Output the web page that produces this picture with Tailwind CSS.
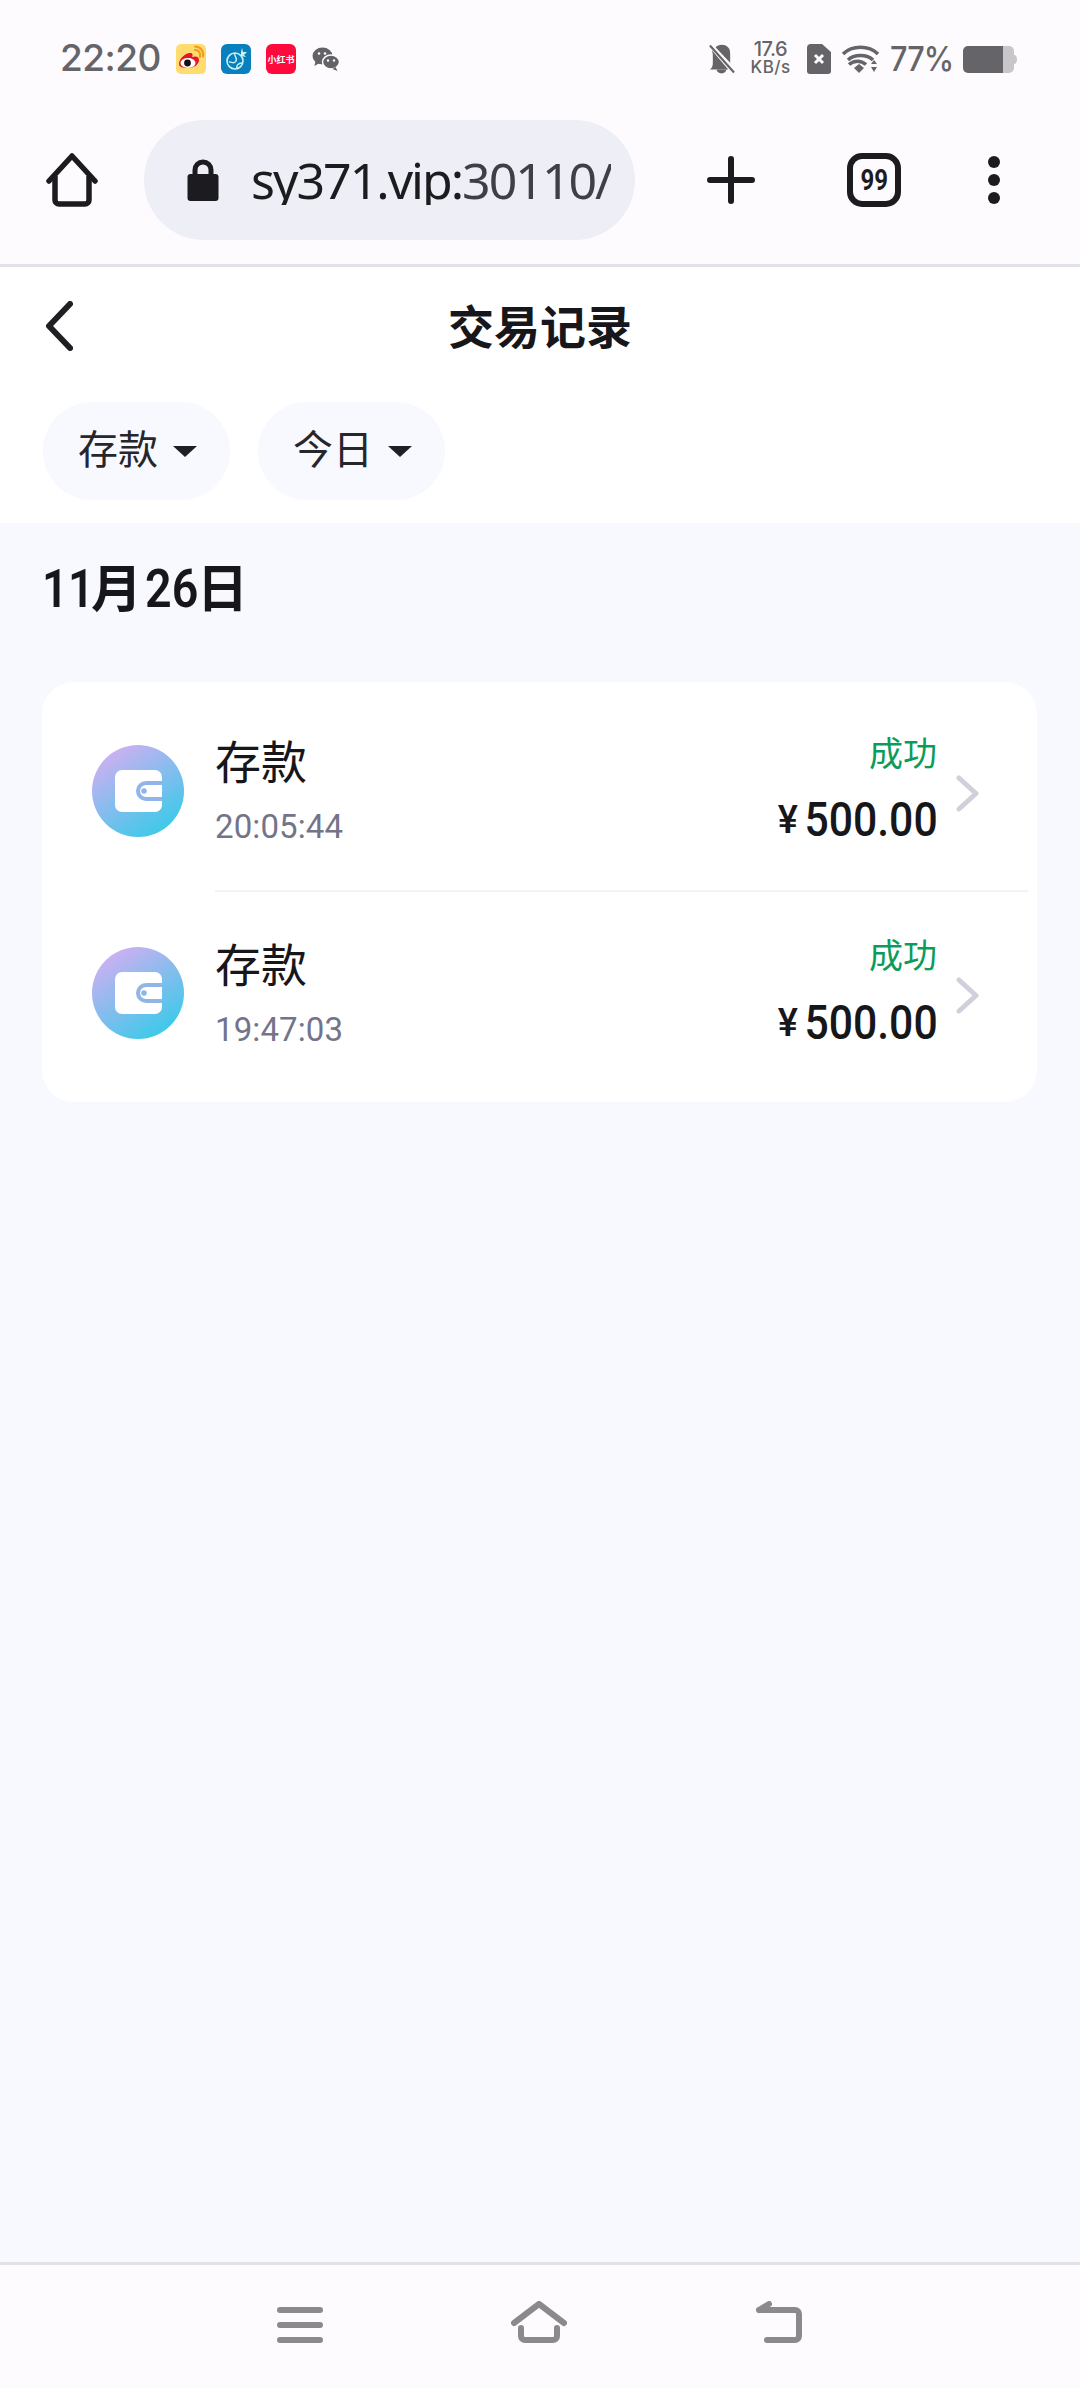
<!DOCTYPE html>
<html lang="zh-CN">
<head>
  <title>交易记录</title>
  <meta charset="UTF-8" />
  <meta name="viewport" content="width=device-width, initial-scale=1.0"/>
  <script src="https://cdn.jsdelivr.net/npm/@tailwindcss/browser@4"></script>
</head>

<body class="w-[1080px] h-[2388px] flex flex-col overflow-hidden bg-[#f8f9fe] text-[#17171b] font-['Roboto','Noto_Sans_CJK_SC',sans-serif]">

  <!-- Browser chrome -->
  <header class="h-[267px] shrink-0 bg-[#fdfbfe] border-b-[3px] border-[#e3e1e8]">

    <!-- Status bar -->
    <div class="h-[114px] flex items-center text-[#656468]">
      <span class="ml-[60px] w-[94px] shrink-0 text-[37px] leading-none font-['Inter',sans-serif] font-medium tracking-[-0.5px]">22:20</span>

      <!-- weibo -->
      <svg class="ml-[22px] mt-[4px] shrink-0" width="30" height="30" viewBox="0 0 30 30">
        <rect width="30" height="30" rx="5" fill="#ffdc6e"/>
        <path d="M3 20c0-5 6-11 11-11 3 0 3 2 2 4 3-1 7-1 7 3 0 5-6 8-11 8-5 0-9-1-9-4z" fill="#e6162d"/>
        <ellipse cx="12" cy="19" rx="7.500" ry="5" fill="#fff"/>
        <circle cx="11.500" cy="19" r="3.400" fill="#111"/>
        <path d="M19 6c4 0 6 3 5 7M19 2.500c6 0 9 5 8 10" fill="none" stroke="#f39a1d" stroke-width="2" stroke-linecap="round"/>
      </svg>

      <!-- blue app -->
      <svg class="ml-[15px] mt-[4px] shrink-0" width="30" height="30" viewBox="0 0 30 30">
        <rect width="30" height="30" rx="6" fill="#0880bd"/>
        <circle cx="14" cy="17" r="8" fill="none" stroke="#c9f2f6" stroke-width="1.600"/>
        <path d="M14 9c-2 3 3 4 1 8s-5 0-7 1M16 25c-1-3 1-6 5-6" fill="none" stroke="#c9f2f6" stroke-width="1.400"/>
        <path d="M20 8l1-4 1 4 4 0-3 3 2 2-5-1z" fill="#c9f2f6"/>
      </svg>

      <!-- xiaohongshu -->
      <div class="ml-[15px] mt-[4px] w-[30px] h-[30px] shrink-0 rounded-[6px] bg-[#fe0a3c] flex items-center justify-center text-white text-[9px] font-bold leading-none whitespace-nowrap font-['Noto_Sans_CJK_SC',sans-serif]">小红书</div>

      <!-- wechat -->
      <svg class="ml-[16px] mt-[4px] shrink-0" width="28" height="24" viewBox="0 0 27 24">
        <ellipse cx="10" cy="9" rx="10" ry="8.500" fill="#636266"/>
        <path d="M3 14l-1 5 5-3z" fill="#636266"/>
        <ellipse cx="18.500" cy="15" rx="8.500" ry="7" fill="#636266" stroke="#fdfbfe" stroke-width="1.500"/>
        <path d="M23 20l2 4-5-2z" fill="#636266"/>
        <circle cx="6.500" cy="6.500" r="1.300" fill="#fdfbfe"/><circle cx="12.500" cy="6.500" r="1.300" fill="#fdfbfe"/>
        <circle cx="15.500" cy="13.500" r="1.200" fill="#fdfbfe"/><circle cx="21.500" cy="13.500" r="1.200" fill="#fdfbfe"/>
      </svg>

      <!-- bell off -->
      <svg class="ml-[368px] mt-[2px] shrink-0" width="27" height="31" viewBox="0 0 28 31">
        <path d="M4 7l17 20H2c2-2 3-3 3-8v-8zM8 4c2-3 9-4 13 0 2 2 2 5 2 8v8z" fill="#656468"/>
        <path d="M9 27a5 4 0 0 0 10 0z" fill="#656468"/>
        <path d="M2 2l25 28" stroke="#656468" stroke-width="2.200"/>
      </svg>

      <!-- network speed -->
      <div class="ml-[14px] w-[43px] shrink-0 flex flex-col items-center font-['Inter',sans-serif] font-medium leading-none">
        <span class="text-[20px] h-[20px] tracking-[-0.5px] whitespace-nowrap">17.6</span>
        <span class="text-[17px] h-[17px] tracking-[0.4px] whitespace-nowrap">KB/s</span>
      </div>

      <!-- sim, no service -->
      <svg class="ml-[15px] mt-[4px] shrink-0" width="24" height="30" viewBox="0 0 24 30">
        <path d="M4 0h11l9 8v19a3 3 0 0 1-3 3H3a3 3 0 0 1-3-3V4a4 4 0 0 1 4-4z" fill="#656468"/>
        <path d="M8 11l8 8M16 11l-8 8" stroke="#fdfbfe" stroke-width="3"/>
      </svg>

      <!-- wifi -->
      <svg class="ml-[11px] mt-[4px] shrink-0" width="37" height="28" viewBox="0 0 37 28">
        <path d="M1 9c9-9 26-9 35 0M6 15c6-6 19-6 25 0" fill="none" stroke="#656468" stroke-width="3.500"/>
        <path d="M7 19.500c5-4.500 12-4.500 17 0" fill="none" stroke="#656468" stroke-width="3.500"/>
        <path d="M12 23l5-4 5 4-5 5z" fill="#656468"/>
        <path d="M32 15l3 4h-6zM32 27l3-5h-6z" fill="#656468"/>
      </svg>

      <span class="ml-[11px] w-[63px] shrink-0 text-[34px] leading-none font-['Inter',sans-serif] font-medium tracking-[-1px] whitespace-nowrap mt-[4px] origin-left scale-x-[.9]">77%</span>

      <!-- battery -->
      <svg class="ml-[10px] mt-[4px] shrink-0" width="54" height="27" viewBox="0 0 54 27">
        <path d="M5 0h35v27H5a5 5 0 0 1-5-5V5a5 5 0 0 1 5-5z" fill="#656468"/>
        <path d="M40 0h6a5 5 0 0 1 5 5v17a5 5 0 0 1-5 5h-6z" fill="#c9c6ca"/>
        <path d="M51 9c2 0 3 2 3 4.500S53 18 51 18z" fill="#c9c6ca"/>
      </svg>
    </div>

    <!-- Toolbar -->
    <div class="flex items-start pt-[6px]">
      <svg class="ml-[45px] mt-[33px] shrink-0" width="54" height="54" viewBox="0 0 52 54">
        <path d="M3 28L26 3l23 25" fill="none" stroke="#1c1b20" stroke-width="5.500" stroke-linecap="round" stroke-linejoin="round"/>
        <path d="M9 23v24a4 4 0 0 0 4 4h26a4 4 0 0 0 4-4V23" fill="none" stroke="#1c1b20" stroke-width="5.500"/>
      </svg>

      <div class="ml-[45px] w-[491px] h-[120px] shrink-0 rounded-full bg-[#eeeff6] flex items-center pl-[43px]">
        <svg class="shrink-0" width="32" height="42" viewBox="0 0 31 42">
          <path d="M7.500 17v-6a8 8 0 0 1 16 0v6" fill="none" stroke="#1c1b20" stroke-width="5"/>
          <rect y="15" width="31" height="27" rx="3" fill="#1c1b20"/>
        </svg>
        <div class="ml-[32px] w-[360px] overflow-hidden whitespace-nowrap text-[50px] leading-none font-['Noto_Sans',sans-serif] tracking-[-2px]"><span class="text-[#1c1b20]">sy371.vip:</span><span class="text-[#3f3f47]">30110/</span></div>
      </div>

      <svg class="ml-[72px] mt-[36px] shrink-0" width="48" height="48" viewBox="0 0 48 48">
        <path d="M24 3v42M3 24h42" stroke="#1c1b20" stroke-width="6" stroke-linecap="round"/>
      </svg>

      <div class="ml-[92px] mt-[33px] w-[54px] h-[54px] shrink-0 rounded-[15px] border-[6px] border-[#1c1b20] flex items-center justify-center">
        <span class="text-[30px] leading-none font-bold text-[#1c1b20] scale-x-[.8]">99</span>
      </div>

      <div class="ml-[87px] mt-[36px] w-[12px] shrink-0 flex flex-col gap-[6px]">
        <span class="w-[12px] h-[12px] rounded-full bg-[#1c1b20]"></span>
        <span class="w-[12px] h-[12px] rounded-full bg-[#1c1b20]"></span>
        <span class="w-[12px] h-[12px] rounded-full bg-[#1c1b20]"></span>
      </div>
    </div>
  </header>

  <!-- Page head with filters -->
  <section class="h-[256px] shrink-0 bg-white px-[43px]">
    <div class="relative h-[135px] flex items-start justify-center">
      <svg class="absolute left-[2px] top-[34px]" width="28" height="50" viewBox="0 0 28 50">
        <path d="M25 3L4 25l21 22" fill="none" stroke="#202024" stroke-width="6" stroke-linecap="round" stroke-linejoin="round"/>
      </svg>
      <h1 class="mt-[34px] text-[46px] leading-[54px] font-bold">交易记录</h1>
    </div>
    <div class="flex gap-[28px]">
      <button class="w-[187px] h-[98px] rounded-full bg-[#f8f9fe] flex items-center pl-[35px] text-[40px] text-[#26262b]">
        <span>存款</span>
        <span class="ml-[15px] w-0 h-0 border-x-[12px] border-x-transparent border-t-[11px] border-t-[#202024]"></span>
      </button>
      <button class="w-[187px] h-[98px] rounded-full bg-[#f8f9fe] flex items-center pl-[35px] text-[40px] text-[#26262b]">
        <span>今日</span>
        <span class="ml-[15px] w-0 h-0 border-x-[12px] border-x-transparent border-t-[11px] border-t-[#202024]"></span>
      </button>
    </div>
  </section>

  <!-- Transactions -->
  <main class="flex-1 px-[42px] pt-[39px]">
    <h2 class="flex items-center h-[54px] text-[51px] leading-none font-semibold text-[#17171b]">
      <span class="inline-block w-[49px] whitespace-nowrap origin-left scale-x-[.86] text-[53px]">11</span><span>月</span><span class="inline-block w-[52px] ml-[3px] whitespace-nowrap origin-left scale-x-[.88] text-[53px]">26</span><span>日</span>
    </h2>

    <div class="mt-[66px] w-[995px] h-[420px] pt-[8px] rounded-[32px] bg-white">

      <!-- row -->
      <div class="h-[200px] flex items-start">
        <svg class="ml-[50px] mt-[55px] shrink-0" width="92" height="92" viewBox="0 0 92 92">
          <defs>
            <linearGradient id="walletBg" x1="0.15" y1="0" x2="0.8" y2="1">
              <stop offset="0" stop-color="#d8aef2"/>
              <stop offset="1" stop-color="#33cbe9"/>
            </linearGradient>
          </defs>
          <circle cx="46" cy="46" r="46" fill="url(#walletBg)"/>
          <rect x="23" y="25" width="47" height="42" rx="7" fill="#fff"/>
          <path d="M70 38H54a8 8 0 0 0 0 16h16" fill="#fff" stroke="#8fb6e6" stroke-width="4"/>
          <circle cx="52" cy="46" r="2.800" fill="#8fb6e6"/>
        </svg>
        <div class="ml-[31px] flex-1 pt-[46px]">
          <div class="text-[46px] leading-[54px] text-[#17171b]">存款</div>
          <div class="mt-[18px] text-[33px] leading-[38px] text-[#73748a] tracking-[0.1px]">20:05:44</div>
        </div>
        <div class="w-[200px] pt-[44px] flex flex-col items-end">
          <div class="text-[34px] leading-[40px] text-[#0b9c59]">成功</div>
          <div class="mt-[22px] flex items-center justify-end h-[48px] font-medium">
            <span class="text-[38px] leading-none">¥</span>
            <span class="inline-block w-[149px] ml-[-10px] text-[48px] leading-none whitespace-nowrap text-right origin-right scale-x-[.89]">500.00</span>
          </div>
        </div>
        <svg class="ml-[19px] mr-[58px] mt-[85px] shrink-0" width="23" height="37" viewBox="0 0 23 37">
          <path d="M3 3l17 15.500L3 34" fill="none" stroke="#d0d0da" stroke-width="5" stroke-linecap="round" stroke-linejoin="round"/>
        </svg>
      </div>

      <div class="ml-[173px] mr-[9px] h-[2px] bg-[#f3f3f6]"></div>

      <!-- row -->
      <div class="h-[210px] flex items-start">
        <svg class="ml-[50px] mt-[55px] shrink-0" width="92" height="92" viewBox="0 0 92 92">
          <circle cx="46" cy="46" r="46" fill="url(#walletBg)"/>
          <rect x="23" y="25" width="47" height="42" rx="7" fill="#fff"/>
          <path d="M70 38H54a8 8 0 0 0 0 16h16" fill="#fff" stroke="#8fb6e6" stroke-width="4"/>
          <circle cx="52" cy="46" r="2.800" fill="#8fb6e6"/>
        </svg>
        <div class="ml-[31px] flex-1 pt-[47px]">
          <div class="text-[46px] leading-[54px] text-[#17171b]">存款</div>
          <div class="mt-[18px] text-[33px] leading-[38px] text-[#73748a] tracking-[0.1px]">19:47:03</div>
        </div>
        <div class="w-[200px] pt-[44px] flex flex-col items-end">
          <div class="text-[34px] leading-[40px] text-[#0b9c59]">成功</div>
          <div class="mt-[23px] flex items-center justify-end h-[48px] font-medium">
            <span class="text-[38px] leading-none">¥</span>
            <span class="inline-block w-[149px] ml-[-10px] text-[48px] leading-none whitespace-nowrap text-right origin-right scale-x-[.89]">500.00</span>
          </div>
        </div>
        <svg class="ml-[19px] mr-[58px] mt-[85px] shrink-0" width="23" height="37" viewBox="0 0 23 37">
          <path d="M3 3l17 15.500L3 34" fill="none" stroke="#d0d0da" stroke-width="5" stroke-linecap="round" stroke-linejoin="round"/>
        </svg>
      </div>
    </div>
  </main>

  <!-- System navigation -->
  <nav class="h-[126px] shrink-0 bg-[#fdfbfe] border-t-[3px] border-[#e3e1e8] flex items-start pt-[36px]">
    <svg class="ml-[277px] shrink-0" width="46" height="45" viewBox="0 0 46 45">
      <path d="M3 9h40M3 24h40M3 39h40" stroke="#8a8a8c" stroke-width="6" stroke-linecap="round"/>
    </svg>
    <svg class="ml-[188px] shrink-0" width="56" height="45" viewBox="0 0 56 45">
      <path d="M3 22L28 3l25 19" fill="none" stroke="#8a8a8c" stroke-width="6" stroke-linecap="round" stroke-linejoin="round"/>
      <path d="M10 27v8a4 4 0 0 0 4 4h28a4 4 0 0 0 4-4v-8" fill="none" stroke="#8a8a8c" stroke-width="6" stroke-linecap="round"/>
    </svg>
    <svg class="ml-[188px] shrink-0" width="47" height="45" viewBox="0 0 47 45">
      <path d="M4 9l10-6M4 9h36a4 4 0 0 1 4 4v22a4 4 0 0 1-4 4H12" fill="none" stroke="#8a8a8c" stroke-width="6" stroke-linecap="round" stroke-linejoin="round"/>
    </svg>
  </nav>

</body>
</html>
